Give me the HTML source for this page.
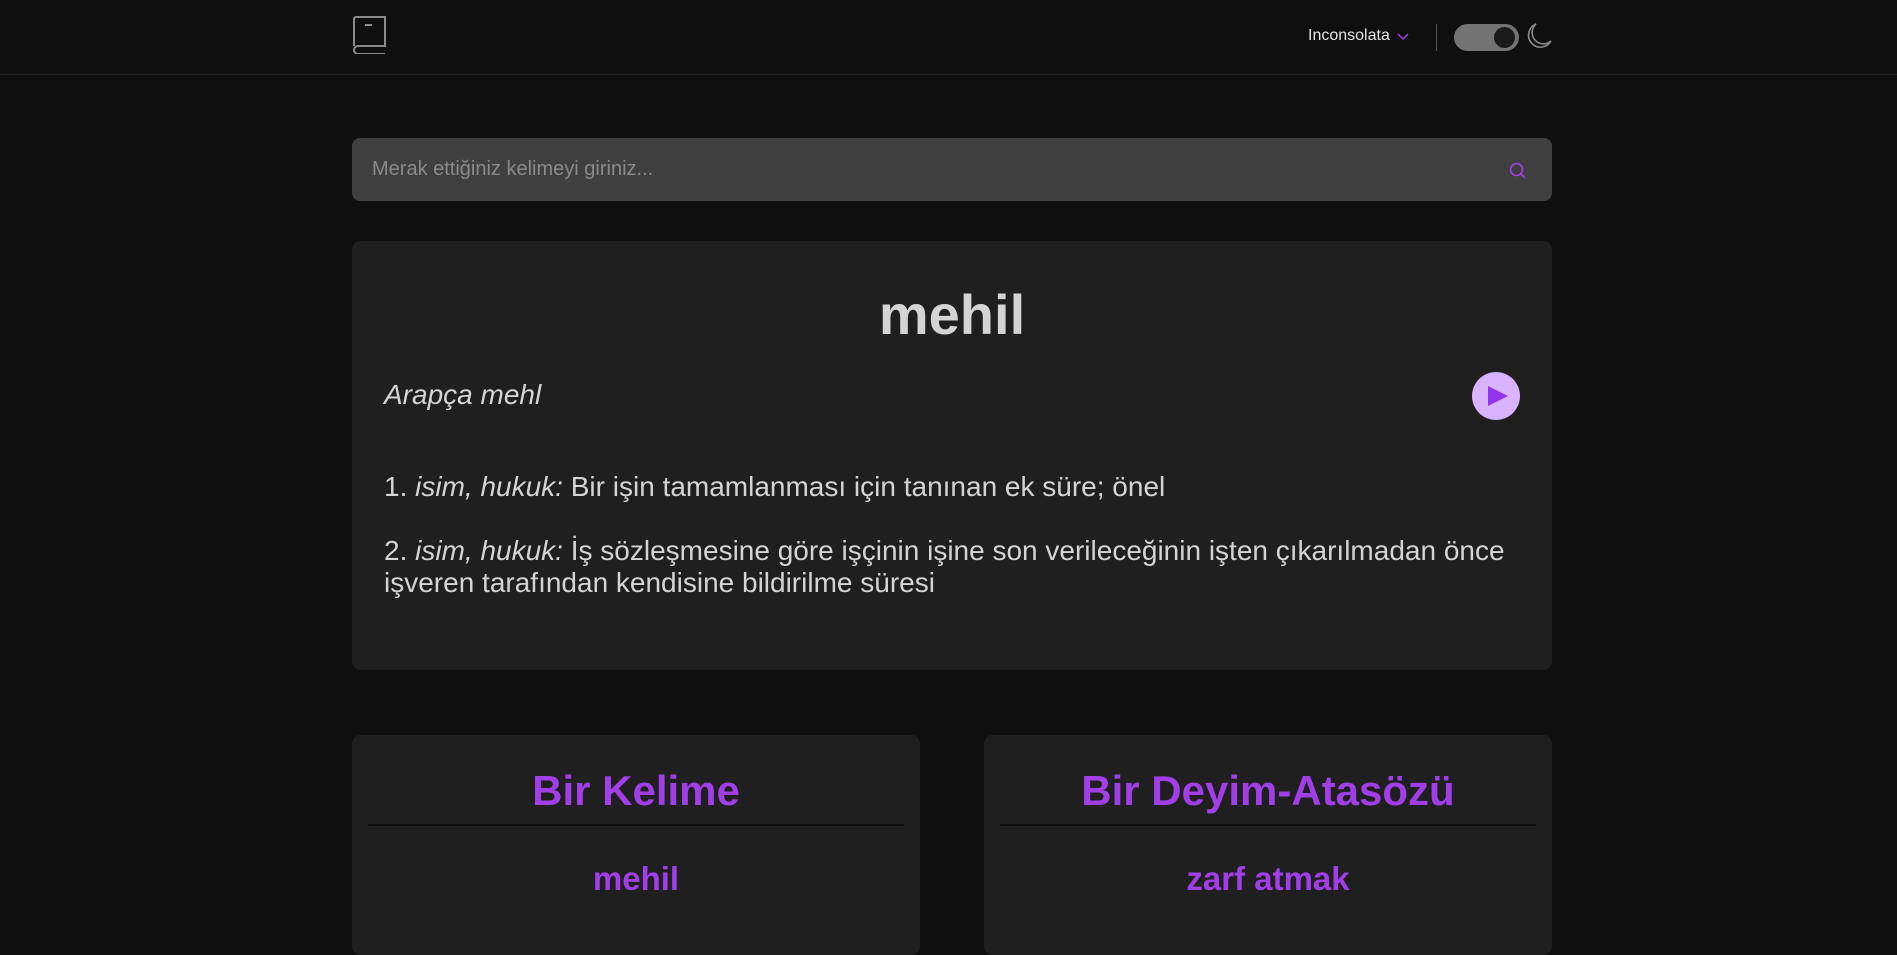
<!DOCTYPE html>
<html><head><meta charset="utf-8"><style>
*{box-sizing:border-box;margin:0;padding:0}
body{width:1897px;height:934px;overflow:hidden;background:#0f0f0f;font-family:"Liberation Sans",Arial,sans-serif;color:#d4d4d4;position:relative}
.hdr{position:absolute;left:0;top:0;width:1897px;height:75px;border-bottom:1px solid #1e1e1e}
.abs{position:absolute}
.search{left:352px;top:138px;width:1200px;height:63px;background:#3f3f3f;border-radius:8px}
.search span{position:absolute;left:20px;top:20px;font-size:20px;color:#8a8a8a}
.card{background:#1f1f1f;border-radius:9px}
.main{left:352px;top:241px;width:1200px;height:429px}
.title{position:absolute;left:352px;width:1200px;top:282px;text-align:center;font-size:56px;font-weight:bold;color:#d4d4d4}
.def{position:absolute;left:384px;font-size:28px;color:#d4d4d4;line-height:32px;width:1140px}
.sm{top:735px;width:568px;height:220px}
.sm h2{text-align:center;font-size:42px;color:#a13ee8;margin-top:32px;height:57px}
.sm hr{border:0;border-top:2px solid #0c0c0c;margin:0 16px}
.sm h3{text-align:center;font-size:33px;color:#a13ee8;margin-top:34px}
</style></head><body>
<div class="hdr"></div>
<svg class="abs" style="left:352px;top:16px" width="36" height="38" viewBox="0 0 36 38" fill="none" stroke="#8a8a8a" stroke-width="2"><path d="M2 30V3a2 2 0 0 1 2-2h29v29H6a4 4 0 0 0 0 8h27"/><path d="M13 9h7"/></svg>
<div class="abs" style="left:1308px;top:27px;font-size:16px;color:#e5e5e5">Inconsolata</div>
<svg class="abs" style="left:1397px;top:33px" width="12" height="8" viewBox="0 0 12 8" fill="none" stroke="#a13ee8" stroke-width="1.5"><path d="M1 1l5 5 5-5"/></svg>
<div class="abs" style="left:1436px;top:24px;width:1px;height:27px;background:#555"></div>
<div class="abs" style="left:1454px;top:24px;width:65px;height:27px;border-radius:14px;background:#737373"></div>
<div class="abs" style="left:1494px;top:27px;width:21px;height:21px;border-radius:50%;background:#1a1a1a"></div>
<svg class="abs" style="left:1526px;top:22px" width="27" height="30" viewBox="0 0 27 30" fill="none" stroke="#8a8a8a" stroke-width="1.6"><path d="M10 2a12 12 0 1 0 15 17A11 11 0 0 1 10 2z"/></svg>
<div class="abs search"><span>Merak ettiğiniz kelimeyi giriniz...</span>
<svg class="abs" style="left:1156px;top:23px" width="20" height="20" viewBox="0 0 20 20" fill="none" stroke="#a13ee8" stroke-width="1.6"><circle cx="8.5" cy="8.5" r="6"/><path d="M13 13l4 4"/></svg></div>
<div class="abs card main"></div>
<div class="title">mehil</div>
<div class="def" style="top:379px;font-style:italic">Arapça mehl</div>
<div class="abs" style="left:1472px;top:372px;width:48px;height:48px;border-radius:50%;background:#d8b4fe"></div>
<svg class="abs" style="left:1487px;top:385px" width="22" height="22" viewBox="0 0 22 22"><path d="M1 1L21 11L1 21Z" fill="#9333ea"/></svg>
<div class="def" style="top:471px">1. <i>isim, hukuk:</i> Bir işin tamamlanması için tanınan ek süre; önel</div>
<div class="def" style="top:535px">2. <i>isim, hukuk:</i> İş sözleşmesine göre işçinin işine son verileceğinin işten çıkarılmadan önce işveren tarafından kendisine bildirilme süresi</div>
<div class="abs card sm" style="left:352px"><h2>Bir Kelime</h2><hr><h3>mehil</h3></div>
<div class="abs card sm" style="left:984px"><h2>Bir Deyim-Atasözü</h2><hr><h3>zarf atmak</h3></div>
</body></html>
